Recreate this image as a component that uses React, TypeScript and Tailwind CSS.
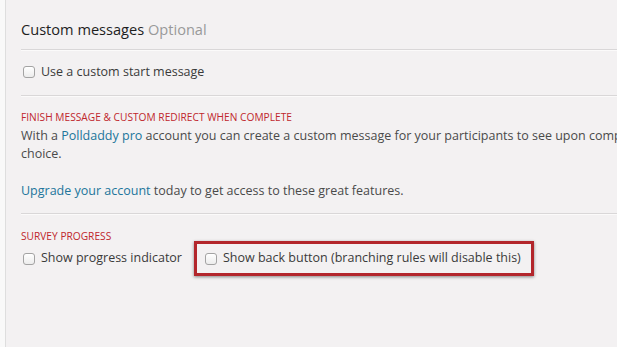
import React from 'react'

const FONT = { fontFamily: '"Open Sans", "Lucida Grande", Verdana, sans-serif' }

function Box() {
  return (
    <span className="inline-block h-[12px] w-[12px] shrink-0 rounded-[3px] border border-[#a3a3a3] bg-gradient-to-b from-white to-[#ececec] shadow-[inset_0_1px_0_rgba(255,255,255,0.8)]" />
  )
}

function Check({ label }: { label: string }) {
  return (
    <label className="flex items-center gap-[6px] text-[12.5px] text-[#3a3a3a]">
      <Box />
      <span>{label}</span>
    </label>
  )
}

export default function App() {
  return (
    <div className="flex h-[347px] w-[617px] overflow-hidden bg-[#f9f9f9]" style={FONT}>
      <div className="w-[5px] shrink-0" />
      <main className="min-w-[720px] flex-1 border-l border-[#dedede] bg-[#f3f1f2] pl-[15px]">
        <header className="h-[50px] border-b border-[#d9d7d8] pt-[18px] shadow-[0_1px_0_#fbfafa]">
          <h2 className="text-[14.6px] leading-[22px] text-[#1e1e1e]">
            Custom messages <span className="text-[#999]">Optional</span>
          </h2>
        </header>

        <div className="flex h-[46px] items-center border-b border-[#d9d7d8] pb-[1px] pl-[2px] shadow-[0_1px_0_#fbfafa]">
          <Check label="Use a custom start message" />
        </div>

        <section className="border-b border-[#d9d7d8] pb-[13px] pt-[14px] shadow-[0_1px_0_#fbfafa]">
          <h3 className="text-[10.2px] uppercase leading-[14px] text-[#c0272d]">
            Finish message &amp; custom redirect when complete
          </h3>
          <p className="mt-[3px] whitespace-nowrap text-[12.5px] leading-[18px] text-[#4a4a4a]">
            With a <a className="text-[#21759b]">Polldaddy pro</a> account you can create a custom message for your participants to see upon completion, or redirect them to a URL of your
            <br />
            choice.
          </p>
          <p className="mt-[19px] text-[12.5px] leading-[18px] text-[#4a4a4a]">
            <a className="text-[#21759b]">Upgrade your account</a> today to get access to these great features.
          </p>
        </section>

        <section className="pt-[16px]">
          <h3 className="text-[10.2px] uppercase leading-[12px] text-[#c0272d]">Survey progress</h3>
          <div className="-mt-px flex items-center gap-[12px] pl-[2px]">
            <Check label="Show progress indicator" />
            <div className="flex h-[35px] items-center border-[3px] border-[#b3262c] pl-[8px] pr-[10px] shadow-[0_1px_3px_rgba(0,0,0,0.45)]">
              <Check label="Show back button (branching rules will disable this)" />
            </div>
          </div>
        </section>
      </main>
    </div>
  )
}
